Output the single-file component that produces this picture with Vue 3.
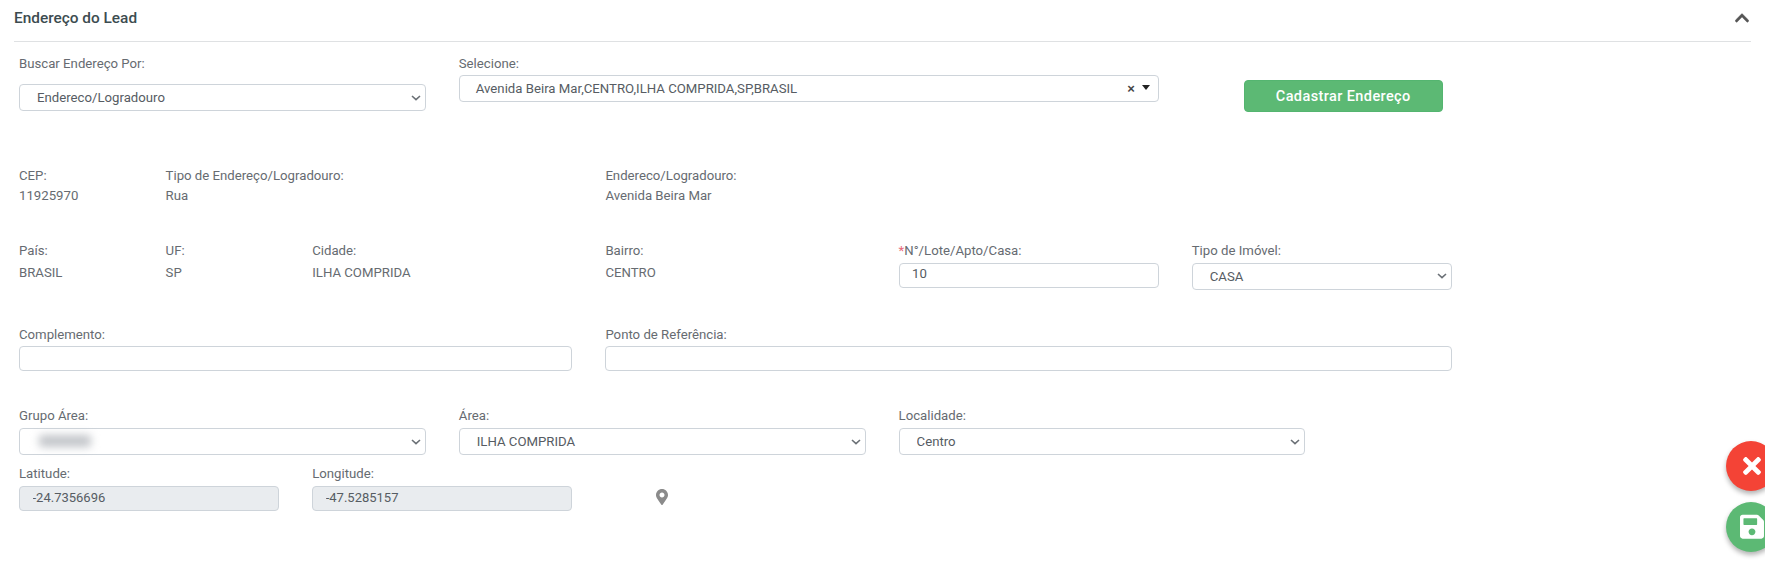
<script setup>
</script>

<template>
  <main class="page">
    <header class="head">
      <h2 class="title">Endereço do Lead</h2>
      <svg class="chev" viewBox="0 0 448 512" aria-hidden="true"><path d="M240.971 130.524l194.343 194.343c9.373 9.373 9.373 24.569 0 33.941l-22.667 22.667c-9.357 9.357-24.522 9.375-33.901.04L224 227.495 69.255 381.516c-9.379 9.335-24.544 9.317-33.901-.04l-22.667-22.667c-9.373-9.373-9.373-24.569 0-33.941L207.03 130.525c9.372-9.373 24.568-9.373 33.941-.001z"/></svg>
    </header>

    <section class="row r1">
      <div class="s3">
        <label>Buscar Endereço Por:</label>
        <select class="ctl sel mt10"><option>Endereco/Logradouro</option></select>
      </div>
      <div class="s5">
        <label>Selecione:</label>
        <div class="combo">
          <span class="combo-text">Avenida Beira Mar,CENTRO,ILHA COMPRIDA,SP,BRASIL</span>
          <span class="combo-x">×</span>
          <span class="combo-arrow"></span>
        </div>
      </div>
      <div class="s2 btn-cell">
        <button class="btn">Cadastrar Endereço</button>
      </div>
    </section>

    <section class="row r2">
      <div class="s1"><label>CEP:</label><p>11925970</p></div>
      <div class="s3"><label>Tipo de Endereço/Logradouro:</label><p>Rua</p></div>
      <div class="s3"><label>Endereco/Logradouro:</label><p>Avenida Beira Mar</p></div>
    </section>

    <section class="row r3">
      <div class="s1"><label>País:</label><p class="v3">BRASIL</p></div>
      <div class="s1"><label>UF:</label><p class="v3">SP</p></div>
      <div class="s2"><label>Cidade:</label><p class="v3">ILHA COMPRIDA</p></div>
      <div class="s2"><label>Bairro:</label><p class="v3">CENTRO</p></div>
      <div class="s2">
        <label><span class="req">*</span>N°/Lote/Apto/Casa:</label>
        <input class="ctl inp mt2" value="10" />
      </div>
      <div class="s2">
        <label>Tipo de Imóvel:</label>
        <select class="ctl sel mt2"><option>CASA</option></select>
      </div>
    </section>

    <section class="row r4">
      <div class="s4"><label>Complemento:</label><input class="ctl inp mt1" /></div>
      <div class="s6"><label>Ponto de Referência:</label><input class="ctl inp mt1" /></div>
    </section>

    <section class="row r5">
      <div class="s3">
        <label>Grupo Área:</label>
        <div class="wrap mt2">
          <select class="ctl sel"><option></option></select>
          <span class="redacted"></span>
        </div>
      </div>
      <div class="s3">
        <label>Área:</label>
        <select class="ctl sel mt2"><option>ILHA COMPRIDA</option></select>
      </div>
      <div class="s3">
        <label>Localidade:</label>
        <select class="ctl sel mt2"><option>Centro</option></select>
      </div>
    </section>

    <section class="row r6">
      <div class="s2"><label>Latitude:</label><input class="ctl inp off mt2" value="-24.7356696" disabled /></div>
      <div class="s2"><label>Longitude:</label><input class="ctl inp off mt2" value="-47.5285157" disabled /></div>
      <div class="s1 pin-cell">
        <svg class="pin" viewBox="0 0 384 512" aria-hidden="true"><path d="M172.268 501.67C26.97 291.031 0 268.413 0 192 0 85.961 85.961 0 192 0s192 85.961 192 192c0 76.413-26.97 99.031-172.268 309.67-9.535 13.774-29.93 13.773-39.464 0zM192 272c44.183 0 80-35.817 80-80s-35.817-80-80-80-80 35.817-80 80 35.817 80 80 80z"/></svg>
      </div>
    </section>

    <button class="fab red" aria-label="Cancelar">
      <svg viewBox="0 0 352 512" class="fab-x"><path d="M242.72 256l100.07-100.07c12.28-12.28 12.28-32.19 0-44.48l-22.24-22.24c-12.28-12.28-32.19-12.28-44.48 0L176 189.28 75.93 89.21c-12.28-12.28-32.19-12.28-44.48 0L9.21 111.45c-12.28 12.28-12.28 32.19 0 44.48L109.28 256 9.21 356.07c-12.28 12.28-12.28 32.19 0 44.48l22.24 22.24c12.28 12.28 32.2 12.28 44.48 0L176 322.72l100.07 100.07c12.28 12.28 32.2 12.28 44.48 0l22.24-22.24c12.28-12.28 12.28-32.19 0-44.48L242.72 256z"/></svg>
    </button>
    <button class="fab green" aria-label="Salvar">
      <svg viewBox="0 0 448 512" class="fab-s"><path d="M433.941 129.941l-83.882-83.882A48 48 0 0 0 316.118 32H48C21.49 32 0 53.49 0 80v352c0 26.51 21.49 48 48 48h352c26.51 0 48-21.49 48-48V163.882a48 48 0 0 0-14.059-33.941zM224 416c-35.346 0-64-28.654-64-64 0-35.346 28.654-64 64-64s64 28.654 64 64c0 35.346-28.654 64-64 64zm96-304.52V212c0 6.627-5.373 12-12 12H76c-6.627 0-12-5.373-12-12V108c0-6.627 5.373-12 12-12h228.52c3.183 0 6.235 1.264 8.485 3.515l3.48 3.48A11.996 11.996 0 0 1 320 111.48z"/></svg>
    </button>
  </main>
</template>

<style>
html, body { margin: 0; background: #fff; overflow: hidden; }
</style>

<style scoped>
.page {
  width: 1765px;
  height: 565px;
  overflow: hidden;
  font-family: Roboto, "Liberation Sans", sans-serif;
  font-size: 13.2px;
  line-height: 20px;
  color: #666b71;
  box-sizing: border-box;
}
.head {
  margin: 0 14px;
  height: 42px;
  border-bottom: 1px solid #dfe1e3;
  display: flex;
  align-items: center;
  justify-content: space-between;
  padding-bottom: 5px;
  box-sizing: border-box;
}
.title {
  margin: 0;
  font-size: 15.4px;
  font-weight: 500;
  color: #3c4c50;
  line-height: 20px;
}
.chev { width: 14px; height: 16px; fill: #555; stroke: #555; stroke-width: 14; margin-right: 2px; }
.row {
  display: grid;
  grid-template-columns: repeat(12, 113.6px);
  column-gap: 33px;
  padding-left: 19px;
  align-items: start;
}
.r1 { margin-top: 12px; }
.r2 { margin-top: 53.5px; }
.r3 { margin-top: 35px; }
.r4 { margin-top: 35px; }
.r5 { margin-top: 35.5px; }
.r6 { margin-top: 9px; }
.s1 { grid-column: span 1; }
.s2 { grid-column: span 2; }
.s3 { grid-column: span 3; }
.s4 { grid-column: span 4; }
.s5 { grid-column: span 5; }
.s6 { grid-column: span 6; }
.r2 .s3:last-child { grid-column: 5 / span 3; }
.r1 .btn-cell { grid-column: 9 / span 2; }
label { display: block; line-height: 20px; white-space: nowrap; }
p { margin: 0; line-height: 20px; }
.v3 { margin-top: 2px; }
.req { color: #e8697a; }
.mt1 { margin-top: 1px; }
.mt2 { margin-top: 2px; }
.mt10 { margin-top: 10px; }
.ctl {
  display: block;
  width: 100%;
  box-sizing: border-box;
  border: 1px solid #ced4da;
  border-radius: 4px;
  background-color: #fff;
  font-family: inherit;
  font-size: 13.2px;
  color: #565c63;
  outline: none;
}
.sel {
  height: 27px;
  padding: 0 0 0 17px;
  appearance: none;
  -webkit-appearance: none;
  background-image: url("data:image/svg+xml,%3Csvg xmlns='http://www.w3.org/2000/svg' width='10' height='6' viewBox='0 0 10 6'%3E%3Cpath d='M1 1l4 3.6L9 1' fill='none' stroke='%236b7076' stroke-width='1.6'/%3E%3C/svg%3E");
  background-repeat: no-repeat;
  background-position: right 4px center;
}
.inp { height: 25px; padding: 0 12.5px 3px; }
.off { background: #e9ecef; color: #565c63; font-size: 13px; padding-bottom: 2px; }
.wrap { position: relative; }
.redacted {
  position: absolute;
  left: 20px;
  top: 7px;
  width: 52px;
  height: 12px;
  background: #c2c5c9;
  filter: blur(4px);
  border-radius: 3px;
}
.combo {
  margin-top: 1px;
  height: 27px;
  box-sizing: border-box;
  border: 1px solid #ced4da;
  border-radius: 4px;
  display: flex;
  align-items: center;
  padding: 1px 8px 0 16px;
  color: #565c63;
}
.combo-text { flex: 1; white-space: nowrap; }
.combo-x { font-family: "Liberation Sans", sans-serif; font-weight: 700; font-size: 13px; color: #444; margin-right: 7px; }
.combo-arrow {
  width: 0; height: 0;
  border-left: 4px solid transparent;
  border-right: 4px solid transparent;
  border-top: 5px solid #222;
  margin-top: -4px;
}
.btn-cell { padding-left: 52px; width: 251px; box-sizing: border-box; }
.btn {
  margin-top: 26px;
  width: 199px;
  height: 32px;
  border: 1px solid #54b570;
  border-radius: 4px;
  background: #5cb974;
  color: #fff;
  font-family: inherit;
  font-size: 14.5px;
  font-weight: 500;
  letter-spacing: 0.4px;
  padding: 1px 0 0;
  white-space: nowrap;
}
.pin-cell { display: flex; justify-content: center; padding-top: 25px; }
.pin { width: 12px; height: 16px; fill: #8b8b8b; }
.fab {
  position: fixed;
  left: 1726px;
  width: 50px;
  height: 50px;
  border-radius: 50%;
  border: 0;
  padding: 0 0 0 2px;
  display: flex;
  align-items: center;
  justify-content: center;
  box-shadow: 0 3px 5px rgba(0,0,0,.3);
}
.red { top: 441px; background: #f44336; }
.green { top: 502px; background: #5cb974; }
.fab-x { width: 18px; height: 26px; fill: #fff; }
.fab-s { width: 24px; height: 27.4px; fill: #fff; }
</style>
